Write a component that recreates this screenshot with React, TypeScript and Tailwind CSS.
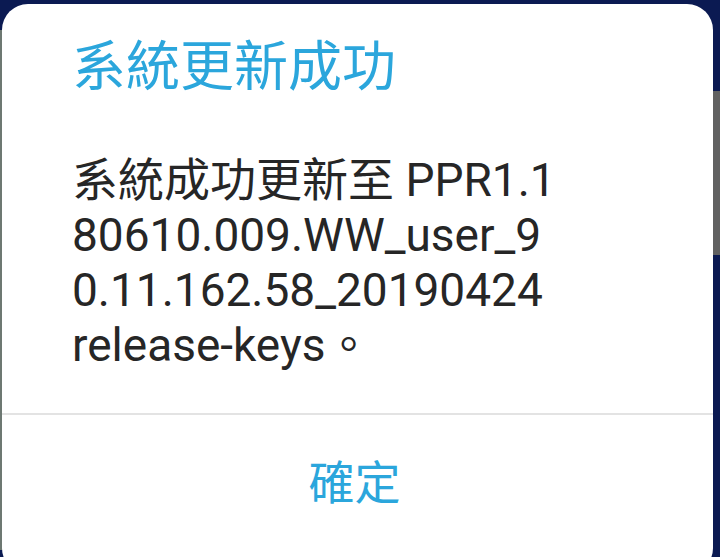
export default function App() {
  const lines = ['系統成功更新至 PPR1.1', '80610.009.WW_user_9', '0.11.162.58_20190424', 'release-keys。'];

  return (
    <div className="relative w-[720px] h-[557px] overflow-hidden bg-[#0b1a52] font-['Roboto','Noto_Sans_CJK_TC',sans-serif]">
      {/* background glimpses */}
      <div className="absolute left-0 top-[30px] w-[3px] h-[520px] bg-[#6d7872]" />
      <div className="absolute right-0 top-[91px] w-[8px] h-[164px] bg-[#616161]" />

      <div className="relative ml-[2px] mt-[4px] w-[711px] h-[570px] rounded-[26px] bg-white flex flex-col">
        <h1 className="pl-[70px] pt-[34px] text-[54px] leading-[60px] text-[#2ba6dc] font-normal">
          系統更新成功
        </h1>

        <div className="pl-[70px] pt-[55px] text-[46px] leading-[55px] text-[#262626]">
          {lines.map((l) => (
            <div key={l} className="whitespace-nowrap">
              {l}
            </div>
          ))}
        </div>

        <div className="mt-[40px] h-[2px] bg-[#e3e3e3]" />

        <button type="button" className="mt-[40px] self-center pr-[6px] text-[46px] leading-[56px] text-[#2ba6dc]">
          確定
        </button>
      </div>
    </div>
  );
}
